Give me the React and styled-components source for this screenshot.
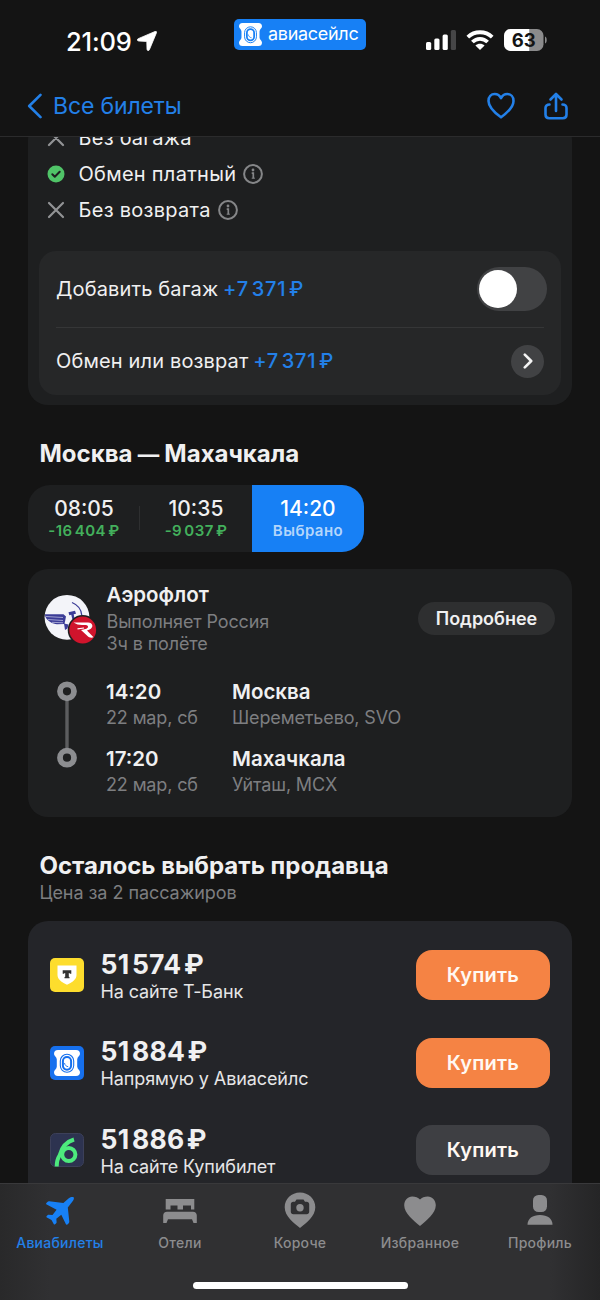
import React, { useState } from "react";
import styled, { createGlobalStyle } from "styled-components";

const GlobalStyle = createGlobalStyle`
  * {
    box-sizing: border-box;
  }
  body {
    margin: 0;
    background: #141414;
    font-family: Inter, "Liberation Sans", sans-serif;
  }
  button {
    font-family: inherit;
    border: none;
    padding: 0;
    cursor: pointer;
  }
  svg {
    display: block;
    flex-shrink: 0;
  }
`;

const Screen = styled.div`
  display: flex;
  flex-direction: column;
  width: 600px;
  height: 1300px;
  background: #141414;
  color: #f0f0f1;
  overflow: hidden;
`;

// Status bar
const StatusBar = styled.div`
  display: grid;
  grid-template-columns: 234px 132px 234px;
  height: 80px;
  flex-shrink: 0;
`;

const Clock = styled.div`
  display: flex;
  align-items: center;
  gap: 5px;
  padding: 2px 0 0 66px;
  font-size: 25.5px;
  font-weight: 500;
  letter-spacing: -0.2px;
  color: #fff;
`;

const Brand = styled.div`
  display: flex;
  align-items: center;
  gap: 6px;
  height: 31px;
  margin-top: 19px;
  padding-left: 5px;
  border-radius: 5px;
  background: #1780f5;
  color: #fff;
  font-size: 18px;
  letter-spacing: -0.3px;
  line-height: 28px;
`;

const BrandName = styled.span`
  margin-top: -2px;
`;

const Indicators = styled.div`
  display: flex;
  align-items: center;
  gap: 10px;
  padding-left: 60px;
`;

// Navigation
const NavBar = styled.header`
  display: flex;
  align-items: center;
  justify-content: space-between;
  height: 57px;
  padding: 0 32.5px 5px 27px;
  border-bottom: 1px solid #2b2b2c;
  flex-shrink: 0;
  color: #2380e8;
`;

const BackLink = styled.button`
  display: flex;
  align-items: center;
  gap: 10px;
  background: none;
  color: inherit;
  font-size: 23px;
  letter-spacing: -0.15px;
`;

const NavActions = styled.div`
  display: flex;
  align-items: center;
  gap: 29px;
`;

// Content
const Content = styled.main`
  flex: 1;
  min-height: 0;
  padding: 0 28px;
  overflow: hidden;
`;

const Card = styled.section`
  background: #1e1f20;
  border-radius: 20px;
`;

const TariffCard = styled(Card)`
  margin-top: -17px;
  padding: 0 11px 10px;
`;

const Condition = styled.div`
  display: flex;
  align-items: center;
  height: 36px;
  padding-left: 8px;
  font-size: 20px;
`;

const ConditionText = styled.span`
  margin: 0 7px 0 13.5px;
  letter-spacing: 0.28px;
`;

const Options = styled.div`
  margin-top: 22.5px;
  padding: 0 17px;
  border-radius: 17px;
  background: #262728;
`;

const Option = styled.div`
  display: flex;
  align-items: center;
  justify-content: space-between;
  height: ${(props) => props.$height}px;
  font-size: 20px;
  letter-spacing: 0.15px;
  & + & {
    border-top: 1px solid #353637;
  }
`;

const Extra = styled.span`
  margin-left: -1px;
  color: #2380e8;
  font-weight: 500;
  letter-spacing: 0.75px;
  word-spacing: -3.3px;
`;

const Toggle = styled.button`
  display: flex;
  justify-content: ${(props) => (props.$on ? "flex-end" : "flex-start")};
  width: 70px;
  height: 44px;
  margin-right: -3px;
  padding: 3px 1.5px;
  border-radius: 22px;
  background: #414244;
`;

const Knob = styled.span`
  width: 38px;
  height: 38px;
  border-radius: 50%;
  background: #fff;
`;

const RoundButton = styled.button`
  display: flex;
  align-items: center;
  justify-content: center;
  width: 33.5px;
  height: 33.5px;
  border-radius: 50%;
  background: #414244;
`;

const Title = styled.h2`
  margin: ${(props) => props.$top}px 0 0 11.5px;
  font-size: 24px;
  line-height: 30px;
  font-weight: 700;
`;

const Dash = styled.span`
  margin: 0 -0.5px;
  font-size: 21.5px;
`;

const TimeTabs = styled.div`
  display: flex;
  width: 336px;
  height: 66.5px;
  margin-top: 16px;
  border-radius: 22px;
  overflow: hidden;
  background: #1e1f20;
`;

const TimeTab = styled.button`
  display: flex;
  flex-direction: column;
  align-items: center;
  width: 112px;
  padding-top: 11px;
  background: ${(props) => (props.$active ? "#1780f5" : "transparent")};
  color: ${(props) => (props.$active ? "#fff" : "#f0f0f1")};
`;

const TabDivider = styled.span`
  align-self: center;
  width: 1px;
  height: 24px;
  margin: 0 0 0 -1px;
  background: #2e2f30;
`;

const TabTime = styled.span`
  font-size: 21px;
  line-height: 25px;
  font-weight: 500;
`;

const TabNote = styled.span`
  font-size: 15px;
  line-height: 20px;
  font-weight: 600;
  letter-spacing: 0.45px;
  word-spacing: -2px;
  color: ${(props) => (props.$active ? "#b4d6fb" : "#43b05c")};
`;

const FlightCard = styled(Card)`
  height: 248.5px;
  margin-top: 17px;
  padding: 13.5px 17px 0 16px;
`;

const AirlineRow = styled.div`
  display: flex;
  height: 84px;
`;

const AirlineInfo = styled.div`
  flex: 1;
  margin-left: 9.5px;
`;

const AirlineName = styled.div`
  margin-bottom: 2.5px;
  font-size: 20.5px;
  line-height: 26px;
  font-weight: 600;
`;

const Muted = styled.div`
  font-size: 18px;
  line-height: ${(props) => props.$line || 22}px;
  letter-spacing: -0.13px;
  color: #7d7e80;
`;

const DetailsButton = styled.button`
  width: 137px;
  height: 33px;
  margin-top: 19.5px;
  border-radius: 17px;
  background: #2e2f30;
  color: #f0f0f1;
  font-size: 18px;
  font-weight: 600;
`;

const Route = styled.div`
  display: grid;
  grid-template-columns: 62px 126px 1fr;
  padding-top: 13px;
`;

const RouteLine = styled.div`
  grid-row: span 2;
  padding-left: 13px;
`;

const Stop = styled.div`
  height: 66.5px;
`;

const StopMain = styled.div`
  font-size: 20.5px;
  line-height: 26px;
  font-weight: 600;
`;

const Subtitle = styled(Muted)`
  margin: 0 0 16px 11.5px;
  letter-spacing: -0.05px;
`;

const SellerCard = styled(Card)`
  padding: 10.5px 22px 0;
  background: #242529;
  border-radius: 20px 20px 0 0;
`;

const Seller = styled.div`
  display: flex;
  align-items: center;
  height: 87.5px;
`;

const SellerInfo = styled.div`
  flex: 1;
  margin-left: 16.5px;
`;

const Price = styled.div`
  margin-top: 2px;
  font-size: 26.5px;
  line-height: 30px;
  font-weight: 750;
  letter-spacing: 0.25px;
  word-spacing: -4px;
`;

const SellerName = styled.div`
  font-size: 18px;
  line-height: 25px;
  letter-spacing: -0.1px;
  color: #e6e6e7;
`;

const BuyButton = styled.button`
  width: 134px;
  height: 50px;
  border-radius: 16px;
  background: ${(props) => (props.$primary ? "#f58344" : "#3e3f43")};
  color: #fff8f2;
  font-size: 20px;
  font-weight: 600;
  letter-spacing: 0.2px;
`;

// Bottom bar
const BottomBar = styled.footer`
  display: flex;
  flex-direction: column;
  align-items: center;
  height: 117px;
  flex-shrink: 0;
  border-top: 1px solid #39393b;
  background: linear-gradient(90deg, #29292a 0, #303032 50px, #303032 550px, #252526 600px);
`;

const BottomTabs = styled.nav`
  display: flex;
  width: 100%;
  height: 98px;
`;

const BottomTab = styled.button`
  display: flex;
  flex-direction: column;
  align-items: center;
  flex: 1;
  padding-top: 8px;
  background: none;
  color: ${(props) => (props.$active ? "#2380e8" : "#8c8c8e")};
  font-size: 14px;
  font-weight: 500;
  line-height: 20px;
  letter-spacing: 0.25px;
  svg {
    margin-bottom: 3px;
  }
`;

const HomeIndicator = styled.div`
  width: 215px;
  height: 7px;
  border-radius: 4px;
  background: #fff;
`;

function LocationIcon() {
  return (
    <svg width="20" height="20" viewBox="0 0 20 20" fill="#fff">
      <path d="M18 .5C19.200 0 19.900 .7 19.400 1.900L12.400 18.700c-.6 1.400-2.300 1.100-2.400-.4l-.2-7.200c0-.4-.2-.7-.7-.7L1.700 10c-1.600-.1-1.900-1.700-.5-2.300z" stroke="#fff" strokeWidth=".8" />
    </svg>
  );
}

function SignalIcon() {
  return (
    <svg width="30" height="20" viewBox="0 0 30 20" fill="#fff">
      <rect x="0" y="12" width="5.2" height="8" rx="1.5" />
      <rect x="8.3" y="8.5" width="5.2" height="11.5" rx="1.5" />
      <rect x="16.6" y="4.5" width="5.2" height="15.5" rx="1.5" />
      <rect x="24.8" y="0" width="5.2" height="20" rx="1.5" fill="#464647" />
    </svg>
  );
}

function WifiIcon() {
  return (
    <svg width="28" height="20" viewBox="0 0 28 20" fill="none" stroke="#fff" strokeWidth="3.8">
      <path d="M1.8 7.2C8.6.6 19.4.6 26.2 7.2" />
      <path d="M6.4 12c4.3-4.3 10.9-4.3 15.2 0" />
      <path d="M14 20l-4.600-4.500c2.600-2.500 6.600-2.500 9.200 0z" fill="#fff" stroke="none" />
    </svg>
  );
}

function BatteryIcon() {
  return (
    <svg width="44" height="22" viewBox="0 0 44 22">
      <rect width="39.5" height="22" rx="6.5" fill="#8b8b8c" />
      <path d="M6.5 0H25.2v22H6.5A6.5 6.5 0 0 1 0 15.5v-9A6.5 6.5 0 0 1 6.5 0z" fill="#fff" />
      <path d="M41 7.5c2.300.8 2.300 6.200 0 7z" fill="#8b8b8c" />
      <text x="19.8" y="17.8" textAnchor="middle" fontSize="18.5" fontWeight="700" fill="#141414">63</text>
    </svg>
  );
}

// Ticket with a porthole in the middle
function TicketLogo({ size, blue = "#1780f5" }) {
  return (
    <svg width={size} height={size} viewBox="0 0 26 26">
      <path
        d="M4 0h18a4 4 0 0 1 4 4c0 2-2.8 3-2.8 5.500v7c0 2.500 2.800 3.500 2.800 5.500a4 4 0 0 1-4 4H4a4 4 0 0 1-4-4c0-2 2.800-3 2.800-5.500v-7C2.800 7 0 6 0 4a4 4 0 0 1 4-4z"
        fill="#fff"
      />
      <rect x="6.3" y="4.3" width="13.4" height="18" rx="6.7" fill="none" stroke={blue} strokeWidth="1.1" />
      <rect x="8.9" y="6.9" width="8.2" height="12.8" rx="4.1" fill="none" stroke={blue} strokeWidth="2" />
      <path d="M10.5 13c.2 2 1.8 3.5 3.7 3.7" fill="none" stroke={blue} strokeWidth=".9" />
    </svg>
  );
}

function BackIcon() {
  return (
    <svg width="16" height="26" viewBox="0 0 16 26" fill="none" stroke="currentColor" strokeWidth="2.6" strokeLinecap="round" strokeLinejoin="round">
      <path d="M13.5 1.8L2.2 13l11.3 11.2" />
    </svg>
  );
}

function HeartIcon() {
  return (
    <svg width="28" height="27" viewBox="0 0 28 27" fill="none" stroke="currentColor" strokeWidth="2.6" strokeLinejoin="round">
      <path d="M14 25.300C9.500 22 1.500 15.800 1.500 8.900 1.500 4.700 4.300 2 7.700 2c2.700 0 5 1.500 6.300 4.200C15.300 3.500 17.600 2 20.300 2c3.400 0 6.200 2.700 6.200 6.900C26.500 15.800 18.500 22 14 25.300z" />
    </svg>
  );
}

function ShareIcon() {
  return (
    <svg width="24" height="28" viewBox="0 0 24 28" fill="none" stroke="currentColor" strokeWidth="2.6" strokeLinecap="round" strokeLinejoin="round">
      <path d="M12 19V2.5M6.5 7.5L12 2l5.5 5.5" />
      <path d="M5.5 12.5C3 12.5 1.5 14 1.5 16v6.5c0 2.300 1.300 3.700 3.700 3.700h13.600c2.400 0 3.700-1.400 3.700-3.700V16c0-2-1.500-3.500-4-3.500" />
    </svg>
  );
}

function CrossIcon() {
  return (
    <svg width="18" height="18" viewBox="0 0 18 18" stroke="#929395" strokeWidth="2.2" strokeLinecap="round">
      <path d="M2 2l14 14M16 2L2 16" />
    </svg>
  );
}

function CheckIcon() {
  return (
    <svg width="18" height="18" viewBox="0 0 18 18" fill="none">
      <circle cx="9" cy="9" r="8.5" fill="#50c468" />
      <path d="M5.3 9.2l2.5 2.5 4.9-4.9" stroke="#1e1f20" strokeWidth="2" strokeLinecap="round" strokeLinejoin="round" />
    </svg>
  );
}

function InfoIcon() {
  return (
    <svg width="20" height="20" viewBox="0 0 20 20" fill="none" stroke="#858688" strokeWidth="2">
      <circle cx="10" cy="10" r="8.9" />
      <circle cx="10" cy="6" r="1.4" fill="#858688" stroke="none" />
      <path d="M8.7 9.2h1.6v5" strokeWidth="1.7" />
      <path d="M8.7 14.2h3.2" strokeWidth="1" />
    </svg>
  );
}

function ChevronIcon() {
  return (
    <svg width="12" height="18" viewBox="0 0 12 18" fill="none" stroke="#f4f4f4" strokeWidth="2.6" strokeLinecap="round" strokeLinejoin="round">
      <path d="M3.8 2.6L10.2 9l-6.4 6.4" />
    </svg>
  );
}

function AirlineLogo() {
  return (
    <svg width="53" height="64" viewBox="0 0 53 64">
      <circle cx="23" cy="35.3" r="22.4" fill="#f3f4f9" />
      <g fill="#3b3c97">
        <path d="M.8 32.3h18.700l2.500 2.200-1.500 7.500-7.500.3c-4.500-.2-9.500-3.500-11.500-7.300z" />
        <path d="M24.500 30.200l6.500-1.500 1 3-2.300.5.800 4.500-2.200.5-1-4.500-2 .5z" />
        <path d="M20 41.500l4.500 1-1 4-2.500 1.500z" />
      </g>
      <path d="M2 34.500l17 1M4 37.500l15 1M8 40.300l11 .5" stroke="#b9bade" strokeWidth=".8" />
      <path d="M28 20.500c6 2.500 9.500 7.500 9.800 13" fill="none" stroke="#3b3c97" strokeWidth="1.3" />
      <circle cx="38.700" cy="48" r="15" fill="#1e1f20" />
      <circle cx="38.700" cy="48" r="13.4" fill="#d0142c" />
      <path
        d="M29.500 40.500H44c5 0 6 5 1.500 7L43 48.500l6.500 6.800c-2.500.8-4.500.2-6-1.300L37 48c3-.6 6.500-1 7-3 .3-1.500-1.300-2-3.300-2H38c-3 0-6-.8-8.500-2.500z"
        fill="#fff"
      />
      <path d="M33.500 46.800L40 46" stroke="#fff" strokeWidth="1.2" />
    </svg>
  );
}

function RouteIcon() {
  return (
    <svg width="20" height="90" viewBox="0 0 20 90" fill="none">
      <path d="M10 19v52" stroke="#5c5d5f" strokeWidth="3.4" />
      <circle cx="10" cy="12.3" r="7" stroke="#8c8d90" strokeWidth="5.8" />
      <circle cx="10" cy="78.7" r="7" stroke="#8c8d90" strokeWidth="5.8" />
    </svg>
  );
}

function BankLogo() {
  return (
    <svg width="34" height="34" viewBox="0 0 34 34">
      <rect width="34" height="34" rx="5" fill="#fddd2d" />
      <path d="M7.5 7.5h19v9.500c0 4.500-4 7-9.500 9.700-5.500-2.700-9.500-5.200-9.500-9.700z" fill="#fff" />
      <path d="M12.7 12.300h8.600v3.500h-1.400l-.5-.9h-.6v3.800l.7.4v1.200h-5v-1.200l.7-.4v-3.800h-.6l-.5.9h-1.400z" fill="#333" />
    </svg>
  );
}

const TicketTile = styled.div`
  display: flex;
  align-items: center;
  justify-content: center;
  width: 34px;
  height: 34px;
  border-radius: 5px;
  background: #1670ee;
`;

function KupibiletLogo() {
  return (
    <svg width="34" height="34" viewBox="0 0 34 34" fill="none">
      <rect x=".5" y=".5" width="33" height="33" rx="5" fill="#2d3350" stroke="#3c4059" />
      <path d="M24 6.500C15.500 9 11.500 15.500 9.800 22 7.500 25.500 6.700 29.500 6.700 33.500" stroke="#4dea7d" strokeWidth="4" />
      <circle cx="18.800" cy="21.500" r="6.600" stroke="#4dea7d" strokeWidth="4" />
    </svg>
  );
}

function PlaneIcon() {
  return (
    <svg width="30" height="38" viewBox="0 0 30 38" fill="#1780f5">
      <path d="M28.600 5.300c.7.700.3 2.200-.8 3.800l-5 6.400 1.500 14c.1.800-.2 1.400-.8 2l-1.100 1c-.6.500-1.300.4-1.600-.4L16.300 22.800l-5 3.900.3 3.300c.1.600-.1 1-.6 1.400l-1 .9c-.5.400-1 .3-1.300-.3L6.500 28l-4.600-2.500c-.6-.3-.7-.8-.2-1.400l.8-.9c.4-.4.800-.5 1.400-.5l3.600.2 4.100-5.200-9.900-5.100c-.7-.4-.8-1-.3-1.600l1-1.100c.5-.6 1.100-.8 1.900-.7l14.100 1.700 5.400-4.700c1.600-1.200 4-1.700 4.800-.9z" />
    </svg>
  );
}

function BedIcon() {
  return (
    <svg width="34" height="38" viewBox="0 0 34 38" fill="currentColor">
      <path d="M2.700 7h28.600v10.500H28v-4h-8v4h-5.500v-4h-7v4H2.700z" />
      <path d="M4 19.800h26c2.300 0 3.800 1.500 3.800 3.800V31h-3.300L29 27.300H5L3.500 31H.2v-7.400c0-2.300 1.500-3.800 3.800-3.800z" />
    </svg>
  );
}

function CameraPinIcon() {
  return (
    <svg width="32" height="38" viewBox="0 0 32 38">
      <path d="M16 .5c8.600 0 15.300 6.500 15.300 14.800C31.300 24.500 22 31 16 36 10 31 .7 24.500 .7 15.300.7 7 7.400.5 16 .5z" fill="currentColor" />
      <path d="M12.500 7.500h7L21 9.700h1.700c1.500 0 2.500 1 2.500 2.500v7.500c0 1.500-1 2.500-2.500 2.500H9.300c-1.500 0-2.500-1-2.500-2.500v-7.500c0-1.500 1-2.500 2.500-2.500H11z" fill="#303032" />
      <circle cx="16" cy="15.700" r="3.700" fill="currentColor" />
    </svg>
  );
}

function HeartTabIcon() {
  return (
    <svg width="32" height="38" viewBox="0 0 32 38" fill="currentColor">
      <path d="M16 34C10 29 .2 21.500.2 13.300.2 8 3.800 4.500 8.200 4.500c3.300 0 6 1 7.800 3 1.800-2 4.500-3 7.800-3 4.400 0 8 3.500 8 8.800C31.800 21.500 22 29 16 34z" />
    </svg>
  );
}

function ProfileIcon() {
  return (
    <svg width="26" height="38" viewBox="0 0 26 38" fill="currentColor">
      <rect x="6" y="3" width="14" height="17" rx="5.5" />
      <path d="M.5 32.700c0-6 5-9.700 12.500-9.700s12.500 3.700 12.500 9.700z" />
    </svg>
  );
}

const times = [
  { time: "08:05", note: "-16 404 ₽" },
  { time: "10:35", note: "-9 037 ₽" },
  { time: "14:20", note: "Выбрано" },
];

const stops = [
  { time: "14:20", date: "22 мар, сб", city: "Москва", airport: "Шереметьево, SVO" },
  { time: "17:20", date: "22 мар, сб", city: "Махачкала", airport: "Уйташ, MCX" },
];

const sellers = [
  { price: "51 574 ₽", name: "На сайте Т-Банк", logo: <BankLogo />, primary: true },
  {
    price: "51 884 ₽",
    name: "Напрямую у Авиасейлс",
    logo: (
      <TicketTile>
        <TicketLogo size={26} blue="#1670ee" />
      </TicketTile>
    ),
    primary: true,
  },
  { price: "51 886 ₽", name: "На сайте Купибилет", logo: <KupibiletLogo />, primary: false },
];

const bottomTabs = [
  { label: "Авиабилеты", icon: <PlaneIcon /> },
  { label: "Отели", icon: <BedIcon /> },
  { label: "Короче", icon: <CameraPinIcon /> },
  { label: "Избранное", icon: <HeartTabIcon /> },
  { label: "Профиль", icon: <ProfileIcon /> },
];

function App() {
  const [baggage, setBaggage] = useState(false);
  const [selected, setSelected] = useState(2);
  const [tab, setTab] = useState(0);

  return (
    <Screen>
      <GlobalStyle />
      <StatusBar>
        <Clock>
          21:09
          <LocationIcon />
        </Clock>
        <Brand>
          <TicketLogo size={23} />
          <BrandName>авиасейлс</BrandName>
        </Brand>
        <Indicators>
          <SignalIcon />
          <WifiIcon />
          <BatteryIcon />
        </Indicators>
      </StatusBar>

      <NavBar>
        <BackLink>
          <BackIcon />
          Все билеты
        </BackLink>
        <NavActions>
          <HeartIcon />
          <ShareIcon />
        </NavActions>
      </NavBar>

      <Content>
        <TariffCard>
          <Condition>
            <CrossIcon />
            <ConditionText>Без багажа</ConditionText>
          </Condition>
          <Condition>
            <CheckIcon />
            <ConditionText>Обмен платный</ConditionText>
            <InfoIcon />
          </Condition>
          <Condition>
            <CrossIcon />
            <ConditionText>Без возврата</ConditionText>
            <InfoIcon />
          </Condition>
          <Options>
            <Option $height={76.5}>
              <span>
                Добавить багаж <Extra>+7 371 ₽</Extra>
              </span>
              <Toggle $on={baggage} onClick={() => setBaggage(!baggage)}>
                <Knob />
              </Toggle>
            </Option>
            <Option $height={67.5}>
              <span>
                Обмен или возврат <Extra>+7 371 ₽</Extra>
              </span>
              <RoundButton>
                <ChevronIcon />
              </RoundButton>
            </Option>
          </Options>
        </TariffCard>

        <Title $top={34.5}>
          Москва <Dash>—</Dash> Махачкала
        </Title>
        <TimeTabs>
          {times.map(({ time, note }, i) => (
            <React.Fragment key={time}>
              {i === 1 && <TabDivider />}
              <TimeTab $active={i === selected} onClick={() => setSelected(i)}>
                <TabTime>{time}</TabTime>
                <TabNote $active={i === selected}>{note}</TabNote>
              </TimeTab>
            </React.Fragment>
          ))}
        </TimeTabs>

        <FlightCard>
          <AirlineRow>
            <AirlineLogo />
            <AirlineInfo>
              <AirlineName>Аэрофлот</AirlineName>
              <Muted>Выполняет Россия</Muted>
              <Muted>3ч в полёте</Muted>
            </AirlineInfo>
            <DetailsButton>Подробнее</DetailsButton>
          </AirlineRow>
          <Route>
            <RouteLine>
              <RouteIcon />
            </RouteLine>
            {stops.map(({ time, date, city, airport }) => (
              <React.Fragment key={time}>
                <Stop>
                  <StopMain>{time}</StopMain>
                  <Muted $line={26}>{date}</Muted>
                </Stop>
                <Stop>
                  <StopMain>{city}</StopMain>
                  <Muted $line={26}>{airport}</Muted>
                </Stop>
              </React.Fragment>
            ))}
          </Route>
        </FlightCard>

        <Title $top={34}>Осталось выбрать продавца</Title>
        <Subtitle $line={24}>Цена за 2 пассажиров</Subtitle>
        <SellerCard>
          {sellers.map(({ price, name, logo, primary }) => (
            <Seller key={name}>
              {logo}
              <SellerInfo>
                <Price>{price}</Price>
                <SellerName>{name}</SellerName>
              </SellerInfo>
              <BuyButton $primary={primary}>Купить</BuyButton>
            </Seller>
          ))}
        </SellerCard>
      </Content>

      <BottomBar>
        <BottomTabs>
          {bottomTabs.map(({ label, icon }, i) => (
            <BottomTab key={label} $active={i === tab} onClick={() => setTab(i)}>
              {icon}
              {label}
            </BottomTab>
          ))}
        </BottomTabs>
        <HomeIndicator />
      </BottomBar>
    </Screen>
  );
}

export default App;
